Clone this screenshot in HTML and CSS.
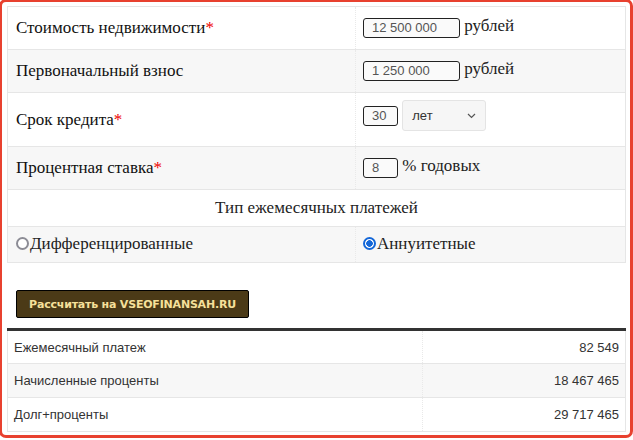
FILE: index.html
```html
<!DOCTYPE html>
<html lang="ru">
<head>
<meta charset="utf-8">
<title>Ипотечный калькулятор</title>
<link rel="stylesheet" href="styles.css">
</head>
<body>
<div class="frame">
  <table class="calc">
    <tr class="row r43">
      <td class="label">Стоимость недвижимости<span class="req">*</span></td>
      <td class="field"><span class="input wide">12 500 000</span> рублей</td>
    </tr>
    <tr class="row alt r43">
      <td class="label">Первоначальный взнос</td>
      <td class="field"><span class="input wide">1 250 000</span> рублей</td>
    </tr>
    <tr class="row r54">
      <td class="label">Срок кредита<span class="req">*</span></td>
      <td class="field f8"><span class="input short">30</span> <span class="select">лет<svg width="9" height="6" viewBox="0 0 9 6"><path d="M1 1l3.5 3.5L8 1" fill="none" stroke="#555" stroke-width="1.2"/></svg></span></td>
    </tr>
    <tr class="row alt r43">
      <td class="label">Процентная ставка<span class="req">*</span></td>
      <td class="field"><span class="input short">8</span> % годовых</td>
    </tr>
    <tr class="row r37">
      <td class="center" colspan="2">Тип ежемесячных платежей</td>
    </tr>
    <tr class="row alt r36">
      <td class="label"><label class="radio"><input type="radio" name="t">Дифференцированные</label></td>
      <td class="field mid"><label class="radio"><input type="radio" name="t" checked>Аннуитетные</label></td>
    </tr>
  </table>
  <button class="btn" type="button">Рассчитать на VSEOFINANSAH.RU</button>
  <table class="result">
    <tr><td class="rl">Ежемесячный платеж</td><td class="rv">82 549</td></tr>
    <tr class="alt"><td class="rl">Начисленные проценты</td><td class="rv">18 467 465</td></tr>
    <tr><td class="rl">Долг+проценты</td><td class="rv">29 717 465</td></tr>
  </table>
</div>
</body>
</html>
```
FILE: styles.css
```css
html, body {
  margin: 0;
  padding: 0;
  background: #fff;
  overflow: hidden;
}
.frame {
  margin: -1px 0 0 -1px;
  width: 634px;
  height: 439px;
  box-sizing: border-box;
  border: 3px solid #e8412f;
  border-radius: 7px;
  padding: 4px 4px 0 5px;
  font-family: "Liberation Serif", "Times New Roman", serif;
  color: #111;
}
.calc {
  width: 619px;
  border-collapse: collapse;
  border: 1px solid #e6e6e6;
  font-size: 17px;
}
.calc td {
  padding: 0 8px;
  border-top: 1px solid #e6e6e6;
}
.calc .row:first-child td { border-top: none; }
.calc .alt { background: #f7f7f7; }
.r43 { height: 43px; }
.r54 { height: 54px; }
.r37 { height: 37px; }
.r36 { height: 36px; }
.label {
  width: 331px;
  vertical-align: middle;
}
.req { color: #e00; }
.field {
  vertical-align: top;
  padding: 8px 8px 0 7px !important;
  border-left: 1px dotted #e9e9e9;
  color: #222;
  line-height: 22px;
}
.field.f8 { padding-top: 7px !important; }
.field.mid { vertical-align: middle; padding-top: 0 !important; }
.center {
  text-align: center;
  color: #222;
}
.input {
  display: inline-block;
  box-sizing: border-box;
  height: 20px;
  border: 1px solid #222;
  border-radius: 3px;
  background: #fafafa;
  font-family: "Liberation Sans", Arial, sans-serif;
  font-size: 13px;
  line-height: 18px;
  color: #555;
  padding-left: 8px;
  position: relative;
  top: 1px;
}
.input.wide { width: 97px; }
.input.short { width: 35px; }
.select {
  display: inline-flex;
  align-items: center;
  justify-content: space-between;
  box-sizing: border-box;
  width: 84px;
  height: 31px;
  padding: 0 9px;
  border: 1px solid #e4e4e4;
  border-radius: 3px;
  background: #f6f6f6;
  font-family: "Liberation Sans", Arial, sans-serif;
  font-size: 13px;
  color: #333;
  vertical-align: middle;
}
.radio {
  display: inline-flex;
  align-items: center;
  color: #222;
}
.radio input {
  appearance: none;
  -webkit-appearance: none;
  box-sizing: border-box;
  margin: 0 1px 0 0;
  width: 13px;
  height: 13px;
  border: 2px solid #8c8c95;
  border-radius: 50%;
  background: #fff;
}
.radio input:checked {
  border-color: #1467d8;
  background: radial-gradient(circle, #1467d8 0 3px, #fff 3.6px);
}
.btn {
  display: block;
  margin: 27px 0 0 9px;
  width: 233px;
  height: 28px;
  box-sizing: border-box;
  background: #4b3a17;
  border: 1px solid #000;
  border-radius: 2px;
  color: #f6e09a;
  font-family: "DejaVu Sans", Verdana, sans-serif;
  font-weight: bold;
  font-size: 11px;
  letter-spacing: -0.2px;
  padding: 0;
}
.result {
  margin-top: 10px;
  width: 619px;
  border-collapse: collapse;
  border-top: 3px solid #333;
  border-left: 1px solid #e6e6e6;
  border-right: 1px solid #e6e6e6;
  border-bottom: 1px solid #e6e6e6;
  font-family: "Liberation Sans", Arial, sans-serif;
  font-size: 13px;
  color: #333;
}
.result td {
  height: 33px;
  padding: 0 6px;
  border-top: 1px solid #e6e6e6;
}
.result tr:first-child td { border-top: none; height: 32px; }
.result .alt { background: #f7f7f7; }
.rl { width: 402px; }
.rv {
  text-align: right;
  border-left: 1px dotted #e9e9e9;
}
```
